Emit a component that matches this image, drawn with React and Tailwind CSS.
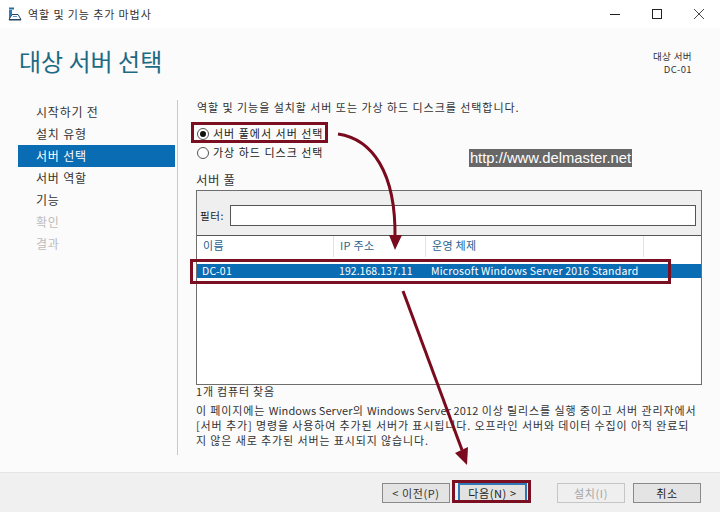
const font = { fontFamily: '"Noto Sans CJK KR", "Liberation Sans", sans-serif' };
const nav = [
  ["시작하기 전", "text-[#333]"],
  ["설치 유형", "text-[#333]"],
  ["서버 선택", "bg-[#0a6cb3] text-white"],
  ["서버 역할", "text-[#333]"],
  ["기능", "text-[#333]"],
  ["확인", "text-[#bdbdbd]"],
  ["결과", "text-[#bdbdbd]"],
];
function Radio({ on }) {
  return (
    <span className="w-[12px] h-[12px] rounded-full border border-[#555] bg-white flex items-center justify-center shrink-0">
      {on && <span className="w-[6px] h-[6px] rounded-full bg-[#111]" />}
    </span>
  );
}
function Btn({ children, cls = "" }) {
  return (
    <div className={`w-[68px] h-[20px] flex items-center justify-center text-[11px] leading-none tracking-[0.6px] ${cls}`}>{children}</div>
  );
}
function L({ children }) {
  return <span className="tracking-[0.1px]">{children}</span>;
}
export default function App() {
  return (
    <div className="relative w-[720px] h-[512px] overflow-hidden bg-[#fbfbfb] flex flex-col text-[#222]" style={font}>
      <div className="h-[28px] bg-white flex items-center shrink-0 pl-[8px]">
        <svg width="14" height="14" viewBox="0 0 14 14" className="mr-[6px] mt-[-1px]">
          <rect x="1" y="0.5" width="5" height="2" fill="#1f6fa8" />
          <rect x="1" y="3" width="3" height="8" fill="#2a7fb8" />
          <path d="M1 12.5 L4 7.5 H10 L13 12.5 Z" fill="#ffffff" stroke="#27465f" strokeWidth="1" />
          <rect x="1" y="12" width="12" height="1.5" fill="#27465f" />
          <rect x="5" y="9" width="4" height="1" fill="#4b9bd0" />
        </svg>
        <span className="text-[11px] tracking-[0.9px] text-[#333]">역할 및 기능 추가 마법사</span>
        <div className="ml-auto flex items-center">
          <svg width="12" height="12" viewBox="0 0 12 12" className="mr-[30px]"><path d="M1 6.5H11" stroke="#222" strokeWidth="1" /></svg>
          <svg width="12" height="12" viewBox="0 0 12 12" className="mr-[30px]"><rect x="1.5" y="1.5" width="9" height="9" fill="none" stroke="#222" strokeWidth="1" /></svg>
          <svg width="12" height="12" viewBox="0 0 12 12" className="mr-[15px]"><path d="M1 1L11 11M11 1L1 11" stroke="#333" strokeWidth="0.9" /></svg>
        </div>
      </div>

      <div className="h-[72px] shrink-0 flex justify-between pl-[19px] pr-[28px]">
        <div className="text-[24px] leading-none mt-[21px] text-[#1d6a85]">대상 서버 선택</div>
        <div className="text-right text-[9.5px] leading-[13px] mt-[22px] tracking-[0.4px] text-[#333]">
          <div>대상 서버</div>
          <div>DC-01</div>
        </div>
      </div>

      <div className="flex-1 flex min-h-0">
        <div className="w-[177px] shrink-0 pl-[18px] pr-[2px] pt-[1px]">
          {nav.map(([t, c]) => (
            <div key={t} className={`h-[22px] pl-[18px] flex items-center text-[12px] tracking-[0.8px] ${c}`}>{t}</div>
          ))}
        </div>
        <div className="w-[1px] h-[355px] bg-[#c9c9c9] shrink-0" />
        <div className="flex-1 pl-[18px] pr-[18px] flex flex-col">
          <div className="h-[14px] text-[11px] leading-[14px] pl-[1px] tracking-[0.95px] text-[#333] whitespace-nowrap">역할 및 기능을 설치할 서버 또는 가상 하드 디스크를 선택합니다.</div>
          <div className="mt-[10px] flex items-center h-[19px] pl-[1px] gap-[4px] text-[11px] tracking-[1px]"><Radio on /><span>서버 풀에서 서버 선택</span></div>
          <div className="flex items-center h-[19px] pl-[1px] gap-[4px] text-[11px] tracking-[1px]"><Radio /><span>가상 하드 디스크 선택</span></div>
          <div className="mt-[9px] h-[17px] text-[12.5px] leading-[17px] tracking-[0.6px] text-[#333]">서버 풀</div>
          <div className="mt-[2px] w-[506px] h-[195px] border border-[#6e6e6e] bg-white flex flex-col">
            <div className="h-[45px] bg-[#efefef] border-b border-[#555] flex items-center pl-[3px] pr-[5px] gap-[3px] pt-[5px] text-[10.5px] tracking-[0.6px]">
              <span className="w-[27px] whitespace-nowrap">필터:</span>
              <div className="flex-1 h-[21px] border border-[#555] bg-white" />
            </div>
            <div className="h-[28px] flex text-[11px] tracking-[0.3px] text-[#1f5f8f]">
              <div className="w-[137px] pl-[6px] pb-[2px] flex items-center border-r border-[#e3e3e3] mb-[7px]">이름</div>
              <div className="w-[92px] pl-[6px] pb-[2px] flex items-center border-r border-[#e3e3e3] mb-[7px]">IP 주소</div>
              <div className="w-[218px] pl-[6px] pb-[2px] flex items-center border-r border-[#e3e3e3] mb-[7px]">운영 체제</div>
            </div>
            <div className="h-[14px] bg-[#0a6cb3] text-white flex items-center text-[10.5px] tracking-[0.2px]">
              <div className="w-[139px] pl-[5px]">DC-01</div>
              <div className="w-[92px] pl-[3px] tracking-[0.05px] whitespace-nowrap">192.168.137.11</div>
              <div className="pl-[3px] whitespace-nowrap">Microsoft Windows Server 2016 Standard</div>
            </div>
          </div>
          <div className="mt-[-1px] h-[15px] text-[11px] leading-[15px] tracking-[0.8px] text-[#333]">1개 컴퓨터 찾음</div>
          <div className="mt-[4px] w-[520px] text-[11px] leading-[15px] tracking-[0.88px] text-[#333]">
            <div className="whitespace-nowrap">이 페이지에는 <L>Windows Server</L>의 <L>Windows Server 2012</L> 이상 릴리스를 실행 중이고 서버 관리자에서</div>
            <div className="whitespace-nowrap">[서버 추가] 명령을 사용하여 추가된 서버가 표시됩니다. 오프라인 서버와 데이터 수집이 아직 완료되</div>
            <div className="whitespace-nowrap">지 않은 새로 추가된 서버는 표시되지 않습니다.</div>
          </div>
        </div>
      </div>

      <div className="h-[40px] shrink-0 bg-[#f0f0f0] border-t border-[#e4e4e4] flex items-start pt-[10px] pl-[382px]">
        <Btn cls="border border-[#8a8a8a] bg-[#e4e4e4] text-[#333]">&lt; 이전(P)</Btn>
        <Btn cls="ml-[8px] border-2 border-[#2f78b5] bg-[#e2e2e2] text-[#222] w-[69px]">다음(N) &gt;</Btn>
        <Btn cls="ml-[30px] border border-[#c6c6c6] bg-[#efefef] text-[#a5a5a5]">설치(I)</Btn>
        <Btn cls="ml-[8px] border border-[#8a8a8a] bg-[#e4e4e4] text-[#222]">취소</Btn>
      </div>

      {/* annotation overlays */}
      <div className="absolute left-[469px] top-[149px] w-[163px] h-[18px] bg-[#676767] text-white text-[14.8px] leading-[18px] text-center whitespace-nowrap" style={{ fontFamily: '"Liberation Sans", sans-serif' }}>http://www.delmaster.net</div>
      <div className="absolute left-[191px] top-[122px] w-[137px] h-[21px] border-[3px] border-[#7a0f22]" />
      <div className="absolute left-[190px] top-[259px] w-[481px] h-[25px] border-[3px] border-[#7a0f22]" />
      <div className="absolute left-[452px] top-[480px] w-[79px] h-[23px] border-[3px] border-[#7a0f22]" />
      <svg className="absolute left-0 top-0 pointer-events-none" width="720" height="512">
        <path d="M338 134 C372 139 396 172 395 238" fill="none" stroke="#7a0a1e" strokeWidth="3" />
        <path d="M389 235 H402 L395 250 Z" fill="#7a0a1e" />
        <path d="M403 291 L462 450" fill="none" stroke="#7a0a1e" strokeWidth="3" />
        <path d="M455 453 L468 447 L467 465 Z" fill="#7a0a1e" />
      </svg>
    </div>
  );
}
